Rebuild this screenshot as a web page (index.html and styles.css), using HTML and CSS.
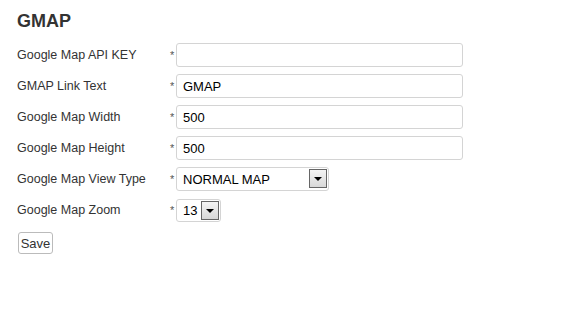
FILE: index.html
```html
<!DOCTYPE html>
<html lang="en">

<head>
    <meta charset="UTF-8">
    <title>GMAP</title>
    <link rel="stylesheet" href="styles.css">
</head>

<body>
    <div class="container">
        <h2>GMAP</h2>

        <form id="gmapForm">
            <div class="row">
                <label for="api_key">Google Map API KEY</label>
                <span class="req">*</span>
                <input type="text" id="api_key" name="api_key">
            </div>

            <div class="row">
                <label for="link_text">GMAP Link Text</label>
                <span class="req">*</span>
                <input type="text" id="link_text" name="link_text" value="GMAP">
            </div>

            <div class="row">
                <label for="map_width">Google Map Width</label>
                <span class="req">*</span>
                <input type="text" id="map_width" name="map_width" value="500">
            </div>

            <div class="row">
                <label for="map_height">Google Map Height</label>
                <span class="req">*</span>
                <input type="text" id="map_height" name="map_height" value="500">
            </div>

            <div class="row">
                <label for="view_type">Google Map View Type</label>
                <span class="req">*</span>
                <div class="select-wrap wide">
                    <select id="view_type" name="view_type">
                        <option>NORMAL MAP</option>
                        <option>SATELLITE MAP</option>
                        <option>HYBRID MAP</option>
                        <option>TERRAIN MAP</option>
                    </select>
                </div>
            </div>

            <div class="row">
                <label for="zoom">Google Map Zoom</label>
                <span class="req">*</span>
                <div class="select-wrap narrow">
                    <select id="zoom" name="zoom">
                        <option>13</option>
                    </select>
                </div>
            </div>

            <button type="submit">Save</button>
        </form>
    </div>
</body>

</html>
```

FILE: styles.css
```css
body {
    font-family: Arial, "Liberation Sans", sans-serif;
    margin: 0;
    background: #fff;
    color: #333;
}

.container {
    padding: 10px 17px;
}

h2 {
    font-size: 18px;
    font-weight: bold;
    margin: 0 0 11px;
    color: #333;
    line-height: 22px;
}

.row {
    display: flex;
    align-items: center;
    margin-bottom: 7px;
    height: 24px;
}

label {
    width: 153px;
    font-size: 12.5px;
}

.req {
    width: 6px;
    font-size: 11px;
    color: #555;
}

input {
    width: 287px;
    height: 24px;
    box-sizing: border-box;
    border: 1px solid #d4d4d4;
    border-radius: 3px;
    padding: 0 6px;
    font-family: inherit;
    font-size: 13px;
    color: #000;
}

.select-wrap {
    position: relative;
    height: 24px;
}

.select-wrap.wide {
    width: 153px;
}

.select-wrap.narrow {
    width: 45px;
    height: 23px;
}

select {
    appearance: none;
    -webkit-appearance: none;
    width: 100%;
    height: 100%;
    box-sizing: border-box;
    border: 1px solid #d4d4d4;
    border-radius: 3px;
    background: #fff;
    padding: 0 6px;
    font-family: inherit;
    font-size: 13px;
    color: #000;
}

.select-wrap::after {
    content: "";
    position: absolute;
    right: 2px;
    top: 2px;
    width: 16px;
    height: 17px;
    border: 1px solid #666;
    background: linear-gradient(#f4f4f4, #d8d8d8);
    pointer-events: none;
}

.select-wrap::before {
    content: "";
    position: absolute;
    right: 7px;
    top: 10px;
    border-left: 4px solid transparent;
    border-right: 4px solid transparent;
    border-top: 4px solid #000;
    z-index: 1;
    pointer-events: none;
}

button {
    margin-top: 3px;
    margin-left: 1px;
    width: 35px;
    height: 22px;
    padding: 0;
    border: 1px solid #bbb;
    border-radius: 3px;
    background: #fff;
    font-family: inherit;
    font-size: 13px;
    color: #333;
    cursor: pointer;
}
```
